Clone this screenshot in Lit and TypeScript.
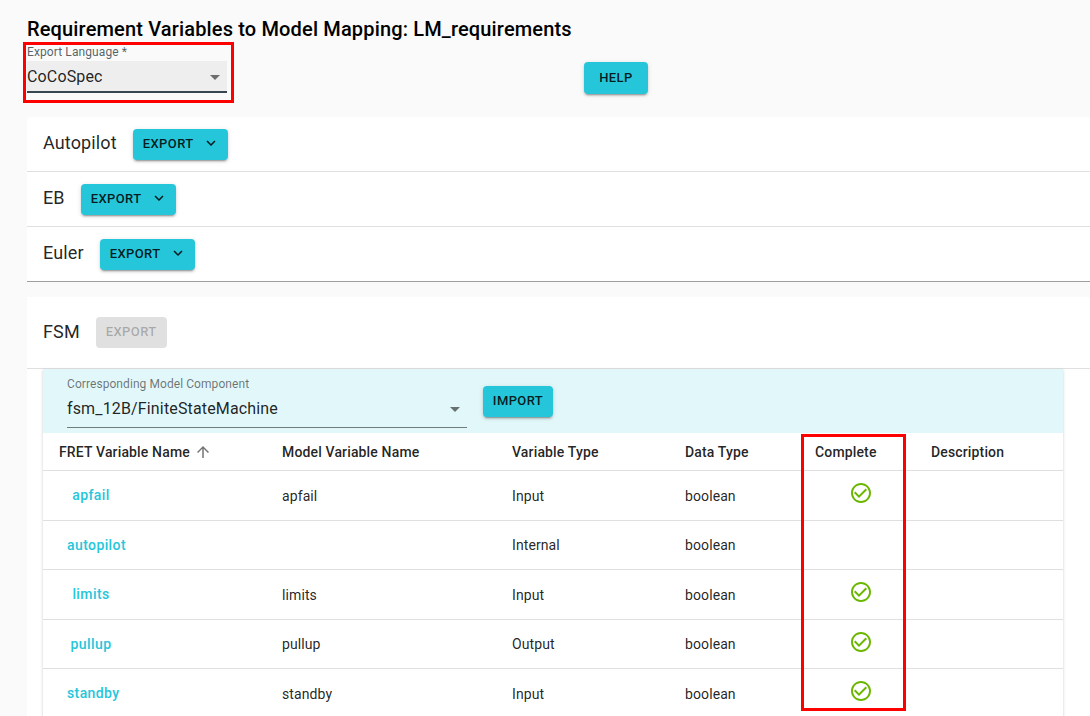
import { LitElement, css, html, nothing } from "lit";
import { customElement } from "lit/decorators.js";

const chevron = html`<svg class="chev" viewBox="0 0 24 24"><path d="M7.41 8.59 12 13.17l4.59-4.58L18 10l-6 6-6-6z"></path></svg>`;
const arrow = html`<svg class="arrow" viewBox="0 0 24 24"><path d="M7 10l5 5 5-5z"></path></svg>`;
const sortUp = html`<svg class="sort" viewBox="0 0 24 24"><path d="M4 12l1.41 1.41L11 7.83V20h2V7.83l5.58 5.59L20 12l-8-8-8 8z"></path></svg>`;
const check = html`<svg class="check" viewBox="0 0 24 24"><path d="M16.59 7.58 10 14.17l-3.59-3.58L5 12l5 5 8-8zM12 2C6.48 2 2 6.48 2 12s4.48 10 10 10 10-4.48 10-10S17.52 2 12 2zm0 18c-4.42 0-8-3.58-8-8s3.58-8 8-8 8 3.58 8 8-3.58 8-8 8z"></path></svg>`;

const components = ["Autopilot", "EB", "Euler"];

const columns = [
  "FRET Variable Name",
  "Model Variable Name",
  "Variable Type",
  "Data Type",
  "Complete",
  "Description",
];

const rows = [
  { name: "apfail", model: "apfail", type: "Input", data: "boolean", done: true },
  { name: "autopilot", model: "", type: "Internal", data: "boolean", done: false },
  { name: "limits", model: "limits", type: "Input", data: "boolean", done: true },
  { name: "pullup", model: "pullup", type: "Output", data: "boolean", done: true },
  { name: "standby", model: "standby", type: "Input", data: "boolean", done: true },
];

@customElement("app-root")
export class AppRoot extends LitElement {
  static styles = css`
    :host {
      display: block;
      position: relative;
      height: 716px;
      overflow: hidden;
      background: #fafafa;
      font-family: Roboto, "Liberation Sans", sans-serif;
      color: rgba(0, 0, 0, 0.87);
    }
    .main {
      padding: 17px 0 0 27px;
      width: 1100px;
      box-sizing: border-box;
    }
    h1 {
      margin: 0;
      font-size: 20px;
      line-height: 24px;
      font-weight: 500;
      letter-spacing: 0.155px;
      color: #000;
    }
    .top {
      display: flex;
      align-items: flex-start;
      height: 76px;
    }
    .lang {
      width: 200px;
      margin-right: 357px;
    }
    .lang-label {
      display: block;
      height: 20px;
      padding-top: 4px;
      box-sizing: border-box;
      font-size: 12px;
      line-height: 14px;
      letter-spacing: 0.1px;
      color: rgba(55, 71, 79, 0.85);
    }
    .lang-field {
      display: flex;
      align-items: center;
      justify-content: space-between;
      height: 32px;
      box-sizing: border-box;
      background: #eeeeee;
      border-bottom: 2px solid #37474f;
      font-size: 16px;
      letter-spacing: 0.15px;
    }
    .lang-field .arrow {
      margin-top: 2px;
    }
    .arrow {
      width: 24px;
      height: 24px;
      fill: rgba(0, 0, 0, 0.54);
    }
    button {
      font-family: inherit;
      border: 0;
      padding: 0;
      background: none;
    }
    .btn {
      display: inline-flex;
      align-items: center;
      height: 31px;
      padding: 0 10px 2px;
      box-sizing: border-box;
      border-radius: 4px;
      background: #26c6da;
      color: rgba(0, 0, 0, 0.87);
      font-size: 13px;
      font-weight: 500;
      letter-spacing: 0.4px;
      box-shadow: 0 3px 1px -2px rgba(0, 0, 0, 0.2), 0 2px 2px rgba(0, 0, 0, 0.14),
        0 1px 5px rgba(0, 0, 0, 0.12);
    }
    .help {
      width: 64px;
      height: 32px;
      margin-top: 21px;
      justify-content: center;
    }
    .btn.off {
      background: #e0e0e0;
      color: rgba(0, 0, 0, 0.26);
      box-shadow: none;
    }
    .chev {
      width: 18px;
      height: 18px;
      margin-left: 8px;
      margin-right: -2px;
      fill: rgba(0, 0, 0, 0.87);
    }
    .group {
      background: #fff;
      border-radius: 4px 4px 0 0;
      border-bottom: 1px solid #9e9e9e;
    }
    .comp {
      display: flex;
      align-items: center;
      gap: 16px;
      height: 55px;
      box-sizing: border-box;
      padding: 0 16px;
      font-size: 18px;
      letter-spacing: 0.13px;
      border-bottom: 1px solid #e0e0e0;
    }
    .comp:last-child {
      border-bottom: 0;
      height: 54px;
    }
    .comp span {
      padding-bottom: 3px;
    }
    .fsm {
      margin-top: 15px;
      background: #fff;
    }
    .fsm .comp {
      height: 72px;
      border-bottom: 1px solid #e0e0e0;
    }
    .panel {
      width: 1020px;
      margin-left: 16px;
      box-shadow: 0 1px 3px rgba(0, 0, 0, 0.2);
    }
    .pick {
      display: flex;
      align-items: flex-start;
      height: 64px;
      padding-left: 24px;
      background: #e2f7f9;
    }
    .pick-select {
      width: 400px;
      margin-right: 16px;
    }
    .pick-label {
      display: block;
      padding-top: 8px;
      font-size: 12px;
      line-height: 14px;
      letter-spacing: 0.07px;
      color: rgba(0, 0, 0, 0.54);
    }
    .pick-field {
      display: flex;
      align-items: center;
      justify-content: space-between;
      height: 33px;
      margin-top: 4px;
      box-sizing: border-box;
      border-bottom: 1px solid rgba(0, 0, 0, 0.5);
      font-size: 16px;
      letter-spacing: 0.15px;
      padding-bottom: 5px;
    }
    .pick .btn {
      margin-top: 17px;
      width: 70px;
      justify-content: center;
      padding: 0 0 2px;
    }
    .row {
      display: grid;
      grid-template-columns: 223px 230px 173px 130px 116px 148px;
      align-items: center;
      height: 49.5px;
      box-sizing: border-box;
      border-bottom: 1px solid #e0e0e0;
      background: #fff;
      font-size: 14px;
      letter-spacing: 0.1px;
    }
    .row > span {
      padding-left: 16px;
      padding-top: 1px;
    }
    .head {
      height: 38px;
      font-weight: 500;
      font-size: 14px;
      letter-spacing: 0.15px;
    }
    .row.head > span {
      display: flex;
      align-items: center;
      padding-top: 0;
    }
    .sort {
      width: 18px;
      height: 18px;
      margin-left: 4px;
      fill: rgba(0, 0, 0, 0.54);
    }
    .row .link {
      min-width: 64px;
      padding: 0 8px;
      margin-left: 16px;
      box-sizing: border-box;
      justify-self: start;
      text-align: center;
      font-size: 14px;
      font-weight: 500;
      letter-spacing: 0.4px;
      color: #26c6da;
    }
    .row > .done {
      display: flex;
      justify-content: center;
      padding: 0 0 4px 8px;
    }
    .check {
      width: 24px;
      height: 24px;
      fill: #6bb700;
    }
    .mark {
      position: absolute;
      border: 3px solid #f00;
      box-sizing: border-box;
      pointer-events: none;
    }
    .mark.lang-mark {
      left: 23px;
      top: 42px;
      width: 211px;
      height: 61px;
    }
    .mark.col-mark {
      left: 801px;
      top: 434px;
      width: 105px;
      height: 277px;
    }
  `;

  render() {
    return html`
      <div class="main">
        <h1>Requirement Variables to Model Mapping: LM_requirements</h1>
        <div class="top">
          <div class="lang">
            <span class="lang-label">Export Language *</span>
            <div class="lang-field"><span>CoCoSpec</span>${arrow}</div>
          </div>
          <button class="btn help">HELP</button>
        </div>
        <div class="group">
          ${components.map(
            (c) => html`<div class="comp">
              <span>${c}</span>
              <button class="btn">EXPORT ${chevron}</button>
            </div>`
          )}
        </div>
        <div class="fsm">
          <div class="comp">
            <span>FSM</span>
            <button class="btn off">EXPORT</button>
          </div>
          <div class="panel">
            <div class="pick">
              <div class="pick-select">
                <span class="pick-label">Corresponding Model Component</span>
                <div class="pick-field">
                  <span>fsm_12B/FiniteStateMachine</span>${arrow}
                </div>
              </div>
              <button class="btn">IMPORT</button>
            </div>
            <div class="row head">
              ${columns.map(
                (c, i) => html`<span>${c}${i === 0 ? sortUp : nothing}</span>`
              )}
            </div>
            ${rows.map(
              (r) => html`<div class="row">
                <button class="link">${r.name}</button>
                <span>${r.model}</span>
                <span>${r.type}</span>
                <span>${r.data}</span>
                <span class="done">${r.done ? check : nothing}</span>
                <span></span>
              </div>`
            )}
          </div>
        </div>
      </div>
      <div class="mark lang-mark"></div>
      <div class="mark col-mark"></div>
    `;
  }
}
